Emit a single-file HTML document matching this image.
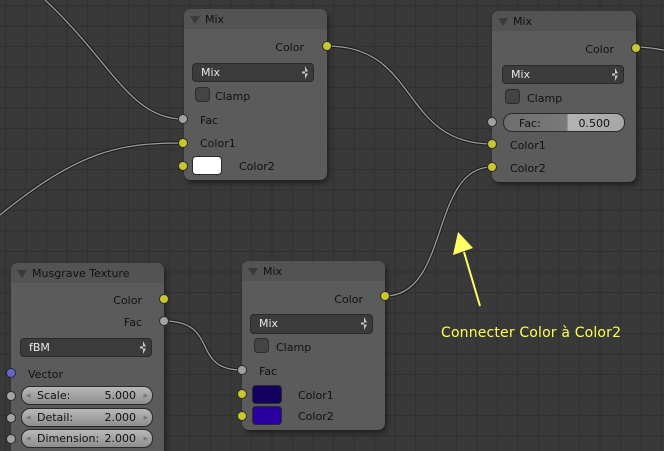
<!DOCTYPE html>
<html><head><meta charset="utf-8"><style>
*{margin:0;padding:0;box-sizing:border-box}
html,body{width:664px;height:451px;overflow:hidden}
body{position:relative;background:#393939;
background-image:linear-gradient(#303030 1px,transparent 1px),linear-gradient(90deg,#303030 1px,transparent 1px);
background-size:20.5px 20.5px;background-position:5px 5px;
font-family:"DejaVu Sans","Liberation Sans",sans-serif;font-size:11px;color:#111}
.node{position:absolute;background:#5b5b5b;border-radius:7px;box-shadow:2px 3px 5px rgba(0,0,0,.45);overflow:visible}
.hdr{position:absolute;left:0;top:0;right:0;height:20px;background:#535353;border-radius:7px 7px 0 0}
.hdr span{position:absolute;left:21px;top:4px}
.tri{position:absolute;left:6px;top:7px;width:0;height:0;border-left:5px solid transparent;border-right:5px solid transparent;border-top:8px solid #3a3a3a}
.t{position:absolute;white-space:nowrap;line-height:13px;margin-top:1px}
.r{text-align:right}
.dd{position:absolute;background:#3b3b3b;border:1px solid #2a2a2a;border-radius:4px;color:#e8e8e8;padding-left:8px;line-height:18px}
.dd:after{content:"";position:absolute;right:5px;top:2px;width:6px;height:13px;
background:#c8c8c8;clip-path:polygon(50% 0,100% 42%,0 42%,0 58%,100% 58%,50% 100%)}
.cb{position:absolute;width:15px;height:15px;background:#444;border:1px solid #2c2c2c;border-radius:4px}
.sk{position:absolute;width:10px;height:10px;border-radius:50%;border:1px solid #2a2a2a;margin:-5px 0 0 -5px}
.y{background:#c8c82a}.g{background:#a2a2a2}.b{background:#6666cc}
.sl{position:absolute;border:1px solid #2a2a2a;border-radius:9px;background:linear-gradient(#b8b8b8,#8e8e8e);line-height:18px;padding:0 16px 0 15px;color:#111}
.sl:before{content:"◂";position:absolute;left:4px;color:#777;font-size:9px}
.sl:after{content:"▸";position:absolute;right:4px;color:#777;font-size:9px;top:0}
.sl b{font-weight:normal;position:absolute;right:16px;top:0}
.sw{position:absolute;width:30px;height:19px;border-radius:4px;border:1px solid #2a2a2a}
</style></head><body>
<svg width="664" height="451" style="position:absolute;left:0;top:0">
<g fill="none" stroke-linecap="round">
<g stroke="#1e1e1e" stroke-width="3.4">
<path d="M45,0 C110,60 130,119 183,119"/>
<path d="M0,215 C80,150 120,143 183,143"/>
<path d="M327,46 C420,46 400,144 492,144"/>
<path d="M636,47 C650,47 655,49 664,50"/>
<path d="M385,296 C450,296 430,167 492,167"/>
<path d="M164,321 C220,321 190,370 242,370"/>
</g>
<g stroke="#9a9a9a" stroke-width="1.3">
<path d="M45,0 C110,60 130,119 183,119"/>
<path d="M0,215 C80,150 120,143 183,143"/>
<path d="M327,46 C420,46 400,144 492,144"/>
<path d="M636,47 C650,47 655,49 664,50"/>
<path d="M385,296 C450,296 430,167 492,167"/>
<path d="M164,321 C220,321 190,370 242,370"/>
</g>
</g>
<line x1="480" y1="306" x2="464" y2="252" stroke="#ffff66" stroke-width="2"/>
<polygon points="458,232 453,255 473,248" fill="#ffff66"/>
<text x="441" y="337" fill="#ffff55" font-family="DejaVu Sans, Liberation Sans, sans-serif" font-size="14" textLength="180">Connecter Color à Color2</text>
</svg>

<!-- Node 1 -->
<div class="node" style="left:184px;top:9px;width:143px;height:171px">
<div class="hdr"><div class="tri"></div><span>Mix</span></div>
<div class="t r" style="right:23px;top:31px">Color</div>
<div class="dd" style="left:8px;top:54px;width:122px;height:19px">Mix</div>
<div class="cb" style="left:11px;top:78px"></div><div class="t" style="left:31px;top:80px">Clamp</div>
<div class="t" style="left:16px;top:104px">Fac</div>
<div class="t" style="left:16px;top:127px">Color1</div>
<div class="sw" style="left:8px;top:147px;background:#fff"></div>
<div class="t" style="left:55px;top:150px">Color2</div>
<div class="sk y" style="left:143px;top:37px"></div>
<div class="sk g" style="left:-1px;top:110px"></div>
<div class="sk y" style="left:-1px;top:134px"></div>
<div class="sk y" style="left:-1px;top:157px"></div>
</div>

<!-- Node 2 -->
<div class="node" style="left:492px;top:11px;width:144px;height:171px">
<div class="hdr"><div class="tri"></div><span>Mix</span></div>
<div class="t r" style="right:22px;top:31px">Color</div>
<div class="dd" style="left:10px;top:54px;width:122px;height:19px">Mix</div>
<div class="cb" style="left:13px;top:78px"></div><div class="t" style="left:35px;top:80px">Clamp</div>
<div style="position:absolute;left:11px;top:102px;width:122px;height:19px;border:1px solid #2a2a2a;border-radius:9px;background:linear-gradient(90deg,#6e6e6e 0,#7a7a7a 53%,#b3b3b3 53%,#a6a6a6 100%)">
<div class="t" style="left:15px;top:2px">Fac:</div><div class="t" style="right:14px;top:2px;color:#111">0.500</div></div>
<div class="t" style="left:18px;top:127px">Color1</div>
<div class="t" style="left:18px;top:150px">Color2</div>
<div class="sk y" style="left:144px;top:37px"></div>
<div class="sk g" style="left:0px;top:111px"></div>
<div class="sk y" style="left:0px;top:133px"></div>
<div class="sk y" style="left:0px;top:156px"></div>
</div>

<!-- Node 3 -->
<div class="node" style="left:242px;top:261px;width:143px;height:169px">
<div class="hdr"><div class="tri"></div><span>Mix</span></div>
<div class="t r" style="right:22px;top:31px">Color</div>
<div class="dd" style="left:8px;top:53px;width:123px;height:20px">Mix</div>
<div class="cb" style="left:12px;top:77px"></div><div class="t" style="left:34px;top:79px">Clamp</div>
<div class="t" style="left:17px;top:103px">Fac</div>
<div class="sw" style="left:10px;top:124px;background:#140060"></div>
<div class="t" style="left:56px;top:127px">Color1</div>
<div class="sw" style="left:10px;top:145px;background:#2b00a0"></div>
<div class="t" style="left:56px;top:148px">Color2</div>
<div class="sk y" style="left:143px;top:35px"></div>
<div class="sk g" style="left:0px;top:109px"></div>
<div class="sk y" style="left:0px;top:133px"></div>
<div class="sk y" style="left:0px;top:155px"></div>
</div>

<!-- Musgrave -->
<div class="node" style="left:11px;top:263px;width:153px;height:195px">
<div class="hdr"><div class="tri"></div><span>Musgrave Texture</span></div>
<div class="t r" style="right:22px;top:30px">Color</div>
<div class="t r" style="right:22px;top:52px">Fac</div>
<div class="dd" style="left:9px;top:75px;width:132px;height:19px">fBM</div>
<div class="t" style="left:17px;top:104px">Vector</div>
<div class="sl" style="left:10px;top:123px;width:132px;height:19px">Scale:<b>5.000</b></div>
<div class="sl" style="left:10px;top:145px;width:132px;height:19px">Detail:<b>2.000</b></div>
<div class="sl" style="left:10px;top:166px;width:132px;height:19px">Dimension:<b>2.000</b></div>
<div class="sk y" style="left:153px;top:36px"></div>
<div class="sk g" style="left:153px;top:58px"></div>
<div class="sk b" style="left:0px;top:110px"></div>
<div class="sk g" style="left:0px;top:133px"></div>
<div class="sk g" style="left:0px;top:155px"></div>
<div class="sk g" style="left:0px;top:176px"></div>
</div>
</body></html>
